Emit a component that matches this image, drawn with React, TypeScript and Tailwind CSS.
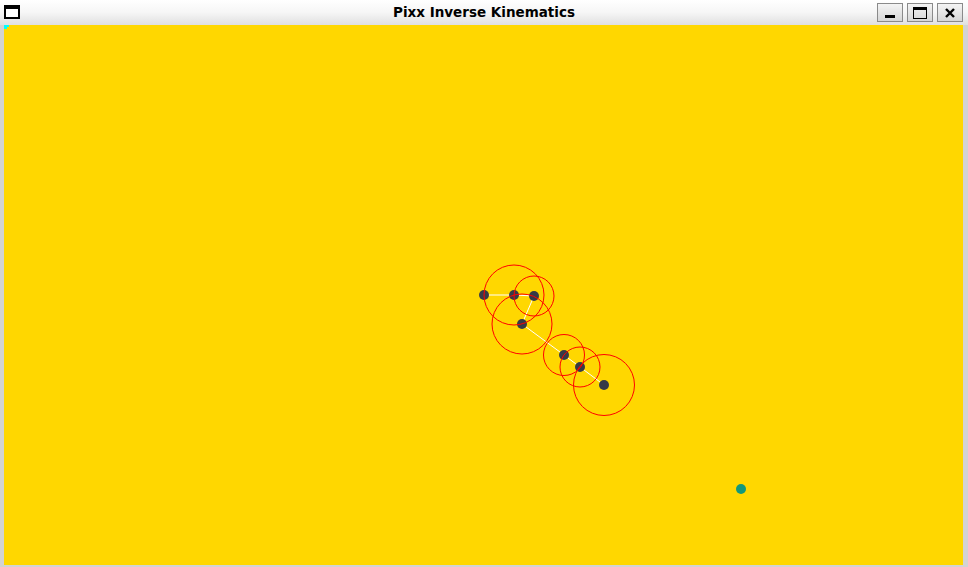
import React from "react";

// joint positions in canvas coords (canvas origin at page 4,25)
const joints = [
  { x: 480, y: 270, r: 0 },
  { x: 510, y: 270, r: 30 },
  { x: 530, y: 271, r: 20 },
  { x: 518, y: 299, r: 30 },
  { x: 560, y: 330, r: 20.5 },
  { x: 576, y: 342, r: 20 },
  { x: 600, y: 360, r: 30.5 },
];

const target = { x: 737, y: 464 };

function TitleButton({ children }: { children: React.ReactNode }) {
  return (
    <div className="w-[26px] h-[19px] border border-[#8a8a8a] bg-gradient-to-b from-[#f4f4f4] to-[#d6d6d6] flex items-center justify-center">
      {children}
    </div>
  );
}

export default function App() {
  return (
    <div className="w-[968px] h-[567px] bg-[#d3d3d3] flex flex-col overflow-hidden font-['DejaVu_Sans',sans-serif]">
      <div className="h-[25px] relative flex items-center bg-gradient-to-b from-white via-[#f6f6f6] to-[#e0e0e0]">
        <div className="absolute left-[4px] top-[5px] w-[16px] h-[14px] border-2 border-black border-t-[4px] bg-white" />
        <div className="flex-1 text-center text-[13.5px] font-bold text-black leading-none pt-[1px]">
          Pixx Inverse Kinematics
        </div>
        <div className="absolute right-[5px] top-[3px] flex gap-[4px]">
          <TitleButton>
            <div className="w-[10px] h-[3px] bg-black mt-[8px]" />
          </TitleButton>
          <TitleButton>
            <div className="w-[14px] h-[12px] border-[1.5px] border-black border-t-[3px]" />
          </TitleButton>
          <TitleButton>
            <svg width="12" height="12" viewBox="0 0 12 12">
              <path d="M2 2 L10 10 M10 2 L2 10" stroke="black" strokeWidth="2.4" />
            </svg>
          </TitleButton>
        </div>
      </div>
      <div className="flex-1 pl-[4px] pr-[5px] pb-[2px]">
        <div className="w-full h-full bg-[#ffd700] relative">
          <svg width="959" height="540" className="block">
            <polygon points="0,0 5,0 5,2 3,2 3,4 0,4" fill="#00ffff" />
            <polyline
              points={joints.map((j) => `${j.x},${j.y}`).join(" ")}
              fill="none"
              stroke="#ffffff"
              strokeWidth="1"
            />
            {joints.map((j, i) => (
              <circle key={"d" + i} cx={j.x} cy={j.y} r="5" fill="#363a47" />
            ))}
            {joints.map((j, i) =>
              j.r > 0 ? (
                <circle
                  key={"c" + i}
                  cx={j.x}
                  cy={j.y}
                  r={j.r}
                  fill="none"
                  stroke="#ff0000"
                  strokeWidth="1"
                />
              ) : null
            )}
            <circle cx={target.x} cy={target.y} r="5" fill="#13987a" />
          </svg>
        </div>
      </div>
    </div>
  );
}
